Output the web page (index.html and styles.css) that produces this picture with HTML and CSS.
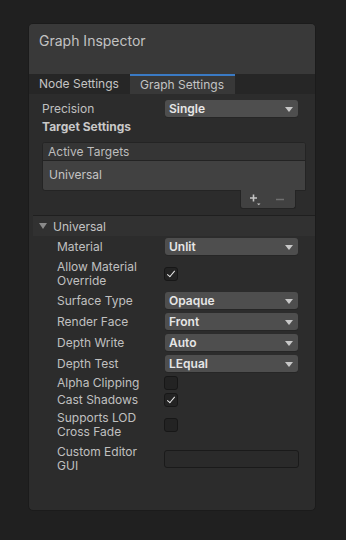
FILE: index.html
```html
<!DOCTYPE html>
<html>
<head>
<meta charset="utf-8">
<link rel="stylesheet" href="styles.css">
</head>
<body>
<div class="panel">
  <div class="header"><span class="title">Graph Inspector</span></div>
  <div class="tabs">
    <div class="tab">Node Settings</div>
    <div class="tab active">Graph Settings</div>
  </div>
  <div class="top">
    <div class="row r21">
      <div class="label lw-top">Precision</div>
      <div class="dropdown"><span>Single</span><i class="arrow"></i></div>
    </div>
    <div class="section-title">Target Settings</div>
    <div class="list">
      <div class="list-head">Active Targets</div>
      <div class="list-body">Universal</div>
    </div>
    <div class="list-foot">
      <div class="footer-btns">
        <svg class="plus" width="12" height="12" viewBox="0 0 12 12"><path d="M3.5 0.5v7M0 4h7" stroke="#c4c4c4" stroke-width="1.6" fill="none"/><path d="M7 9.5h3.5l-1.75 1.8z" fill="#c4c4c4"/></svg>
        <svg class="minus" width="9" height="9" viewBox="0 0 9 9"><path d="M0 4.5h8" stroke="#707070" stroke-width="1.6"/></svg>
      </div>
    </div>
  </div>
  <div class="universal">
    <div class="fold-head"><i class="tri"></i><span>Universal</span></div>
    <div class="rows">
      <div class="row r21"><div class="label">Material</div><div class="dropdown"><span>Unlit</span><i class="arrow"></i></div></div>
      <div class="row r33"><div class="label two">Allow Material<br>Override</div><div class="checkbox checked"></div></div>
      <div class="row r21"><div class="label">Surface Type</div><div class="dropdown"><span>Opaque</span><i class="arrow"></i></div></div>
      <div class="row r21"><div class="label">Render Face</div><div class="dropdown"><span>Front</span><i class="arrow"></i></div></div>
      <div class="row r21"><div class="label">Depth Write</div><div class="dropdown"><span>Auto</span><i class="arrow"></i></div></div>
      <div class="row r21"><div class="label">Depth Test</div><div class="dropdown"><span>LEqual</span><i class="arrow"></i></div></div>
      <div class="row r17"><div class="label">Alpha Clipping</div><div class="checkbox"></div></div>
      <div class="row r17"><div class="label">Cast Shadows</div><div class="checkbox checked"></div></div>
      <div class="row r34"><div class="label two">Supports LOD<br>Cross Fade</div><div class="checkbox"></div></div>
      <div class="row r34"><div class="label two">Custom Editor<br>GUI</div><div class="textfield"></div></div>
    </div>
  </div>
</div>
</body>
</html>
```
FILE: styles.css
```css
* { box-sizing: border-box; }
html, body { margin: 0; padding: 0; }
body {
  background: #202020;
  width: 346px;
  height: 540px;
  font-family: Inter, "Noto Sans", sans-serif;
  font-size: 12px;
  color: #c4c4c4;
  overflow: hidden;
}
.panel {
  margin: 23px 0 0 28px;
  width: 288px;
  height: 488px;
  background: #2c2c2c;
  border: 1px solid #1b1b1b;
  border-radius: 5px;
  overflow: hidden;
}
.header {
  height: 50px;
  background: #393939;
  padding: 8px 10px 0;
}
.title {
  font-size: 14px;
  line-height: 18px;
  color: #c2c2c2;
}
.tabs {
  display: flex;
  height: 20px;
  background: #262626;
}
.tab {
  flex: none;
  white-space: nowrap;
  padding: 0 10px;
  line-height: 20px;
  font-size: 12px;
  color: #c4c4c4;
  width: 101px;
}
.tab.active {
  width: 105px;
  background: #383838;
  border-top: 2px solid #3a7ac4;
  line-height: 18px;
}
.top {
  padding: 4px 9px 0 13px;
}
.row {
  display: flex;
  align-items: center;
}
.r21 { height: 21px; }
.r17 { height: 17px; }
.r33 { height: 33px; }
.r34 { height: 34px; }
.label {
  width: 108px;
  flex: none;
  line-height: 14px;
  color: #c0c0c0;
  font-size: 12px;
}
.label.lw-top { width: 123px; }
.dropdown {
  width: 133px;
  height: 17px;
  background: #4e4e4e;
  border-radius: 3px;
  display: flex;
  align-items: center;
  justify-content: space-between;
  padding: 0 5px 0 4px;
  font-weight: 600;
  color: #e6e6e6;
  font-size: 12px;
  box-shadow: 0 1px 0 #262626;
}
.arrow {
  width: 0;
  height: 0;
  border-left: 4px solid transparent;
  border-right: 4px solid transparent;
  border-top: 5px solid #c8c8c8;
  margin-top: 1px;
}
.section-title {
  height: 17px;
  line-height: 16px;
  font-weight: 700;
  color: #c8c8c8;
}
.list {
  margin-top: 6px;
  background: #414141;
  border: 1px solid #242424;
  border-radius: 3px 3px 0 3px;
  overflow: hidden;
}
.list-head {
  height: 18px;
  line-height: 18px;
  background: #353535;
  border-bottom: 1px solid #232323;
  padding-left: 5px;
  color: #bdbdbd;
}
.list-body {
  height: 29px;
  line-height: 27px;
  padding-left: 6px;
  color: #c4c4c4;
}
.list-foot {
  display: flex;
  justify-content: flex-end;
  padding-right: 10px;
}
.footer-btns {
  width: 56px;
  height: 19px;
  margin-top: -1px;
  background: #414141;
  border: 1px solid #242424;
  border-top: none;
  border-radius: 0 0 3px 3px;
  display: flex;
  align-items: center;
  padding-left: 9px;
  gap: 14px;
}
.plus { margin-top: 2px; }
.minus { margin-top: 1px; }
.universal {
  margin-top: 6px;
  margin-left: 4px;
  border-top: 1px solid #1f1f1f;
}
.fold-head {
  height: 20px;
  background: #313131;
  display: flex;
  align-items: center;
  padding-left: 6px;
}
.tri {
  width: 0;
  height: 0;
  border-left: 4px solid transparent;
  border-right: 4px solid transparent;
  border-top: 6px solid #8a8a8a;
  margin-right: 6px;
}
.rows {
  padding-left: 24px;
}
.checkbox {
  width: 14px;
  height: 14px;
  background: #232323;
  border: 1px solid #171717;
  border-radius: 3px;
  margin-left: -1px;
  position: relative;
}
.checkbox.checked::after {
  content: "";
  position: absolute;
  left: 4px;
  top: 1px;
  width: 3px;
  height: 7px;
  border-right: 1.6px solid #e8e8e8;
  border-bottom: 1.6px solid #e8e8e8;
  transform: rotate(40deg);
}
.textfield {
  width: 135px;
  height: 18px;
  margin-left: -1px;
  background: #2a2a2a;
  border: 1px solid #1a1a1a;
  border-radius: 3px;
}
```
